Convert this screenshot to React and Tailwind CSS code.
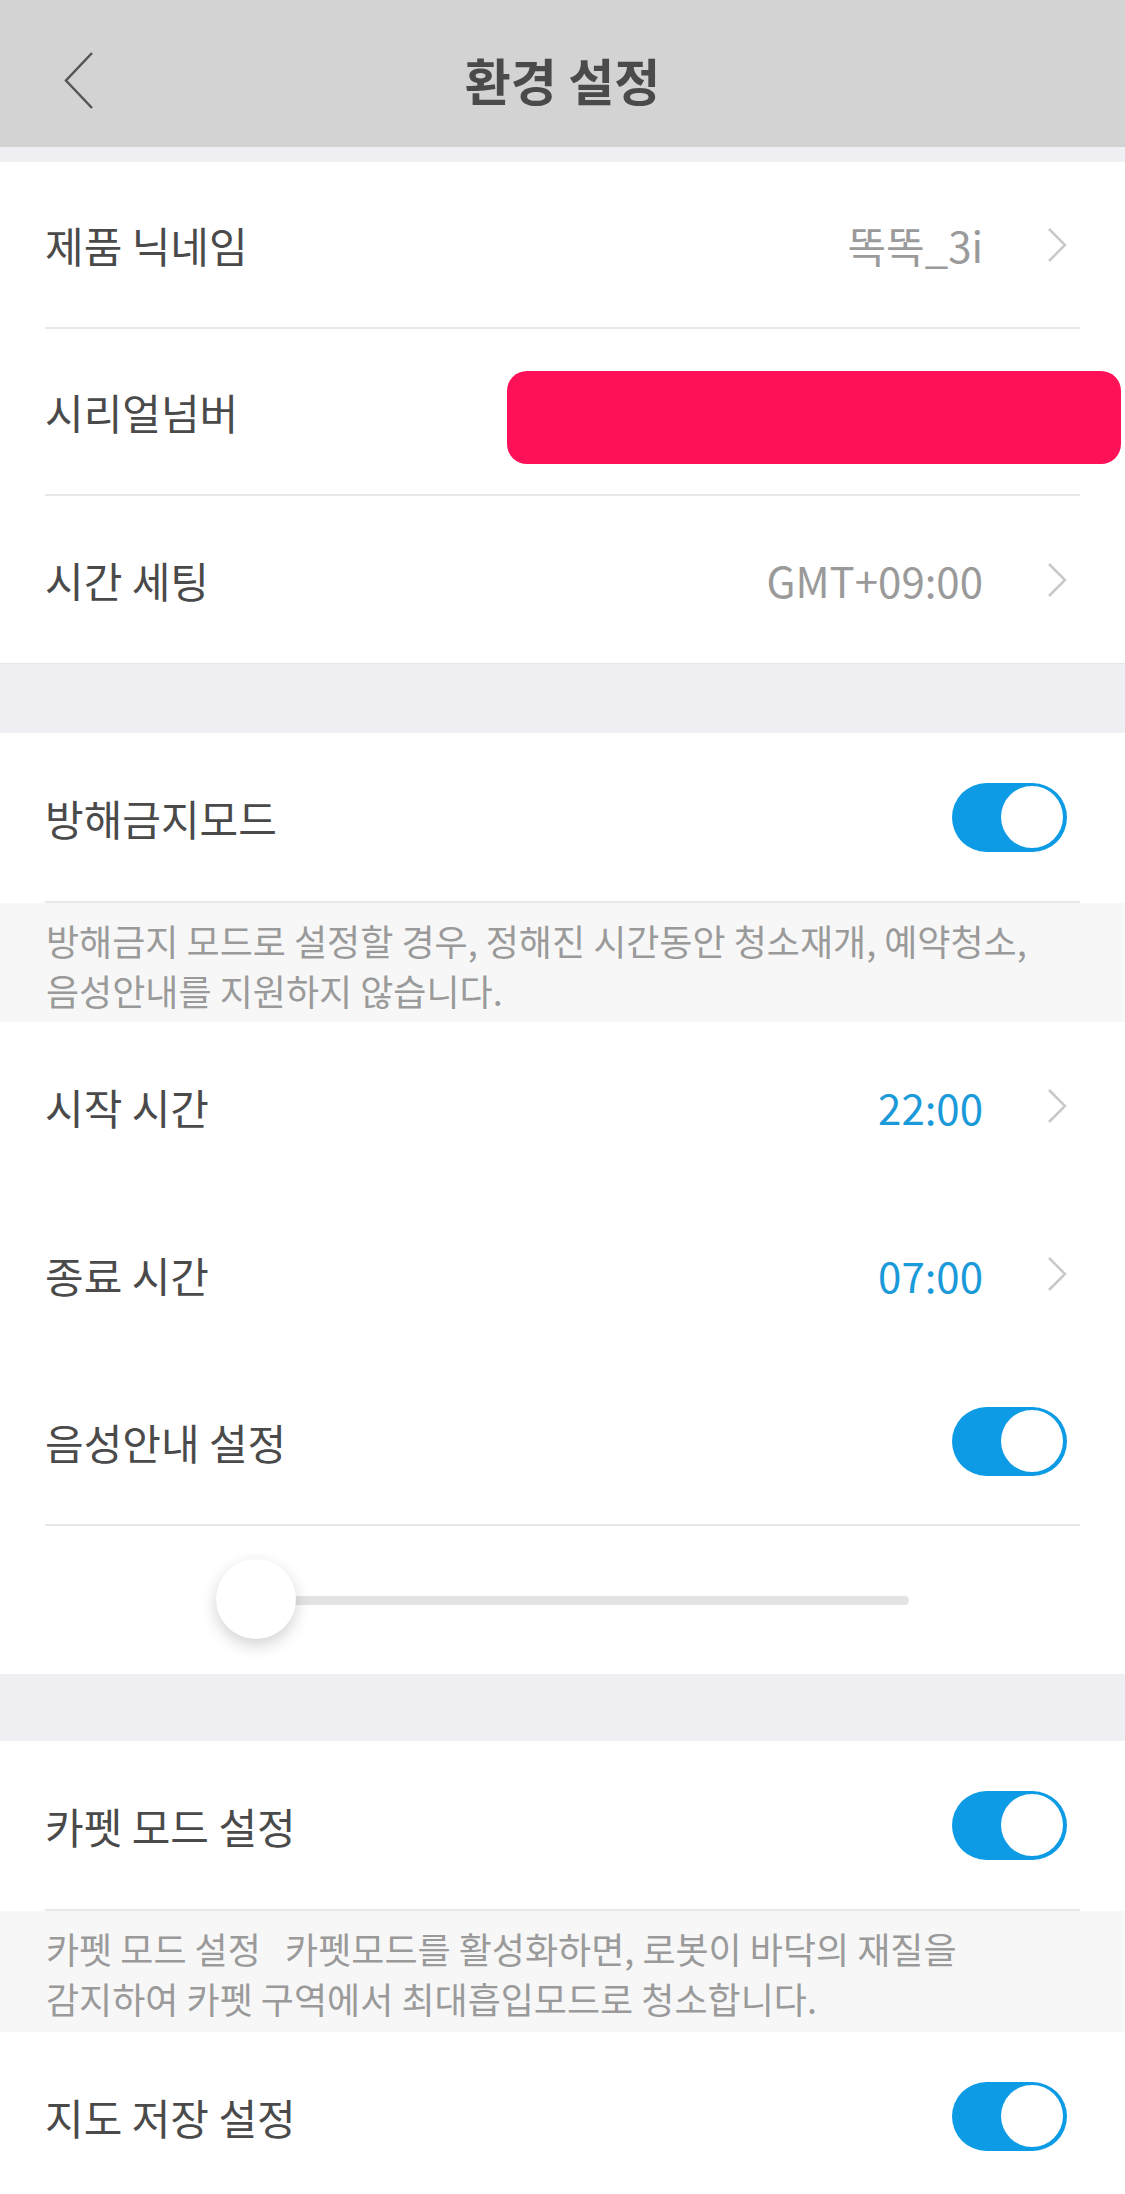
const FONT = { fontFamily: '"Noto Sans CJK KR", "Noto Sans", sans-serif' };

const Chevron = () => (
  <svg width="20" height="34" viewBox="0 0 20 34" fill="none" stroke="#c8c8c8" strokeWidth="2.5">
    <polyline points="2,1 18,17 2,33" />
  </svg>
);

const Toggle = () => (
  <div className="w-[115px] h-[69px] rounded-full bg-[#0e9be5] flex items-center justify-end pr-[4px]">
    <div className="w-[62px] h-[62px] rounded-full bg-white"></div>
  </div>
);

const Row = ({ label, value, blue, toggle, chevron, border, h = 'h-[168px]' }) => (
  <div
    className={
      'mx-[45px] flex items-center justify-between pr-[13px] ' +
      h +
      (border ? ' border-b-2 border-[#e8e8e8]' : '')
    }
  >
    <span className="text-[42px] text-[#4a4a4a]">{label}</span>
    <div className="flex items-center gap-[64px]">
      {value && (
        <span className={'text-[42px] ' + (blue ? 'text-[#1a9ad9]' : 'text-[#9a9a9a]')}>{value}</span>
      )}
      {chevron && <Chevron />}
      {toggle && <Toggle />}
    </div>
  </div>
);

const Note = ({ children, h = 'h-[119px]' }) => (
  <div className={'bg-[#f7f7f7] px-[46px] pt-[12px] text-[36px] leading-[50px] text-[#9a9a9a] ' + h}>
    {children}
  </div>
);

const Gap = ({ h }) => <div className={'bg-[#f0f0f4] ' + h}></div>;

export default function App() {
  return (
    <div className="w-[1125px] h-[2194px] overflow-hidden bg-white" style={FONT}>
      {/* header */}
      <div className="relative h-[147px] bg-[#d3d3d3] flex items-center justify-center">
        <svg className="absolute left-[64px] top-[52px]" width="30" height="57" viewBox="0 0 30 57" fill="none" stroke="#555" strokeWidth="2.5">
          <polyline points="28,1 2,28.5 28,56" />
        </svg>
        <h1 className="text-[50px] font-bold text-[#4a4a4a] mt-[12px]">환경 설정</h1>
      </div>
      <Gap h="h-[15px]" />

      {/* device info */}
      <div className="relative bg-white border-b border-[#e6e6e6]">
        <Row label="제품 닉네임" value="똑똑_3i" chevron border h="h-[167px]" />
        <Row label="시리얼넘버" border h="h-[167px]" />
        <Row label="시간 세팅" value="GMT+09:00" chevron h="h-[167px]" />
        <div className="absolute left-[507px] top-[209px] w-[614px] h-[93px] rounded-[20px] bg-[#ff1158]"></div>
      </div>
      <Gap h="h-[69px]" />

      {/* do not disturb */}
      <div className="bg-white">
        <Row label="방해금지모드" toggle border h="h-[170px]" />
        <Note>
          방해금지 모드로 설정할 경우, 정해진 시간동안 청소재개, 예약청소,
          <br />
          음성안내를 지원하지 않습니다.
        </Note>
        <Row label="시작 시간" value="22:00" blue chevron />
        <Row label="종료 시간" value="07:00" blue chevron />
        <Row label="음성안내 설정" toggle border />
        <div className="h-[148px] flex items-center">
          <div className="relative ml-[216px] w-[693px] h-[9px] rounded-full bg-[#e3e3e6]">
            <div className="absolute left-0 top-[-37px] w-[80px] h-[80px] rounded-full bg-white shadow-[0_6px_16px_rgba(0,0,0,0.18)]"></div>
          </div>
        </div>
      </div>
      <Gap h="h-[67px]" />

      {/* carpet / map */}
      <div className="bg-white">
        <Row label="카펫 모드 설정" toggle border h="h-[170px]" />
        <Note h="h-[121px]">
          카펫 모드 설정&nbsp;&nbsp; 카펫모드를 활성화하면, 로봇이 바닥의 재질을
          <br />
          감지하여 카펫 구역에서 최대흡입모드로 청소합니다.
        </Note>
        <Row label="지도 저장 설정" toggle />
      </div>
    </div>
  );
}
